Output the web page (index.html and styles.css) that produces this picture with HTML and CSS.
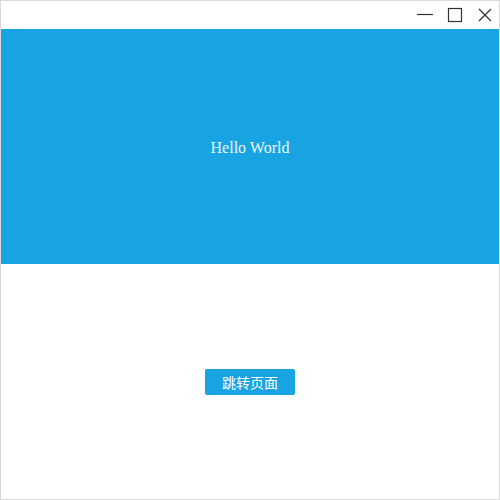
FILE: index.html
```html
<!DOCTYPE html>
<html>
<head>
<meta charset="utf-8">
<link rel="stylesheet" href="styles.css">
</head>
<body>
<div class="window">
  <div class="titlebar">
    <button class="ctl" aria-label="minimize">
      <svg width="16" height="16" viewBox="0 0 16 16"><path d="M0 7.5H16" stroke="#333" stroke-width="1.2" fill="none"/></svg>
    </button>
    <button class="ctl" aria-label="maximize">
      <svg width="16" height="16" viewBox="0 0 16 16"><rect x="1.5" y="1.5" width="13" height="13" stroke="#333" stroke-width="1.2" fill="none"/></svg>
    </button>
    <button class="ctl" aria-label="close">
      <svg width="16" height="16" viewBox="0 0 16 16"><path d="M2 2L14 14M14 2L2 14" stroke="#333" stroke-width="1.3" fill="none"/></svg>
    </button>
  </div>
  <div class="banner">Hello World</div>
  <div class="content">
    <button class="jump">跳转页面</button>
  </div>
</div>
</body>
</html>
```
FILE: styles.css
```css
html, body {
  margin: 0;
  padding: 0;
  background: #ffffff;
}
.window {
  box-sizing: border-box;
  width: 500px;
  height: 500px;
  border: 1px solid #d9d9d9;
  display: flex;
  flex-direction: column;
  background: #ffffff;
}
.titlebar {
  box-sizing: border-box;
  height: 28px;
  display: flex;
  justify-content: flex-end;
  align-items: center;
  gap: 14px;
  padding-right: 6px;
  padding-bottom: 1px;
}
.ctl {
  border: none;
  background: transparent;
  padding: 0;
  width: 16px;
  height: 16px;
  display: flex;
}
.banner {
  height: 235px;
  background: #18a4e2;
  color: #eef7fc;
  display: flex;
  align-items: center;
  justify-content: center;
  font-family: "Liberation Serif", serif;
  font-size: 16px;
  padding-top: 2px;
  box-sizing: border-box;
}
.content {
  flex: 1;
  display: flex;
  align-items: center;
  justify-content: center;
}
.jump {
  width: 90px;
  height: 26px;
  border: none;
  border-radius: 2px;
  background: #18a4e2;
  color: #ffffff;
  font-family: "Noto Sans CJK SC", sans-serif;
  font-size: 14px;
  line-height: 26px;
  padding: 0;
}
```
